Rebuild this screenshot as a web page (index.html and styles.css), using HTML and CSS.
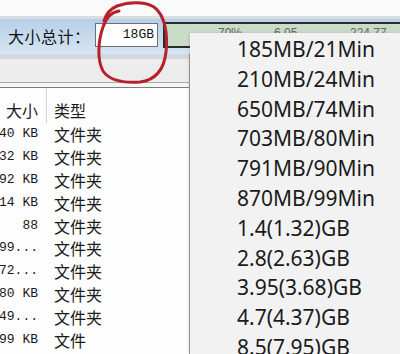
FILE: index.html
```html
<!DOCTYPE html>
<html lang="zh-CN">

<head>
    <meta charset="UTF-8">
    <meta name="viewport" content="width=device-width, initial-scale=1.0">
    <title>大小总计</title>
    <link rel="stylesheet" href="styles.css">
</head>

<body>
    <div class="window">
        <div class="top-band"></div>

        <div class="toolbar">
            <div class="total-label">大小总计：</div>
            <div class="total-input">18GB</div>
            <div class="progress">
                <span class="p-pct">70%</span>
                <span class="p-used">6.05 GB</span>
                <span class="p-free">224.77 MB</span>
            </div>
        </div>

        <div class="pane">
            <div class="sub-bar"></div>
            <div class="sub-gap"></div>
            <div class="list">
                <div class="list-head">
                    <div class="col-size">大小</div>
                    <div class="col-type">类型</div>
                </div>
                <div class="row"><div class="col-size">1,440 KB</div><div class="col-type">文件夹</div></div>
                <div class="row"><div class="col-size">832 KB</div><div class="col-type">文件夹</div></div>
                <div class="row"><div class="col-size">192 KB</div><div class="col-type">文件夹</div></div>
                <div class="row"><div class="col-size">314 KB</div><div class="col-type">文件夹</div></div>
                <div class="row"><div class="col-size">88</div><div class="col-type">文件夹</div></div>
                <div class="row"><div class="col-size">1,799...</div><div class="col-type">文件夹</div></div>
                <div class="row"><div class="col-size">572...</div><div class="col-type">文件夹</div></div>
                <div class="row"><div class="col-size">380 KB</div><div class="col-type">文件夹</div></div>
                <div class="row"><div class="col-size">349...</div><div class="col-type">文件夹</div></div>
                <div class="row"><div class="col-size">599 KB</div><div class="col-type">文件</div></div>
            </div>
        </div>

        <!-- disc sizes dropdown -->
        <ul class="size-menu">
            <li>185MB/21Min</li>
            <li>210MB/24Min</li>
            <li>650MB/74Min</li>
            <li>703MB/80Min</li>
            <li>791MB/90Min</li>
            <li>870MB/99Min</li>
            <li>1.4(1.32)GB</li>
            <li>2.8(2.63)GB</li>
            <li>3.95(3.68)GB</li>
            <li>4.7(4.37)GB</li>
            <li>8.5(7.95)GB</li>
        </ul>

        <!-- hand drawn red circle -->
        <svg class="mark" viewBox="0 0 400 354" width="400" height="354">
            <path d="M119,11 C112,12 106,18 103,27 C98,41 97,60 103,71 C109,80 124,83 140,82 C156,80 164,70 166,52 C168,34 165,15 154,7 C144,1 128,2 117,6 C110,9 106,14 104,21"
                fill="none" stroke="#b5222b" stroke-width="3" stroke-linecap="round" />
        </svg>
    </div>
</body>

</html>
```

FILE: styles.css
```css
body {
    margin: 0;
    background: #fff;
    font-family: "Noto Sans CJK SC", sans-serif;
}

.window {
    position: relative;
    width: 400px;
    height: 354px;
    overflow: hidden;
    background: #fdfdfd;
}

.top-band {
    height: 16px;
    background: #fafafa;
    border-bottom: 3px solid #d9dde1;
}

.toolbar {
    display: flex;
    height: 35px;
    padding-left: 8px;
    background: linear-gradient(#b7cfe8, #d6e5f3);
}

.total-label {
    width: 87px;
    margin-top: 7px;
    font-size: 16px;
    line-height: 20px;
    letter-spacing: 0.5px;
    color: #111;
}

.total-input {
    width: 63px;
    height: 24px;
    margin-top: 4px;
    box-sizing: border-box;
    padding-right: 3px;
    border: 1px solid #6f6f6f;
    background: #fff;
    font-family: "Liberation Mono", monospace;
    font-size: 13px;
    line-height: 22px;
    text-align: right;
    color: #111;
}

.progress {
    flex: 1;
    display: flex;
    height: 26px;
    margin-top: 3px;
    margin-left: 5px;
    box-sizing: border-box;
    padding: 2px 0 0 53px;
    border: 2px solid #2b2b2b;
    border-right: none;
    background: #c9dcc7;
    font-family: "Liberation Sans", sans-serif;
    font-size: 12px;
    line-height: 14px;
    color: #666;
}

.p-used {
    margin-left: 32px;
}

.p-free {
    margin-left: 38px;
}

.pane {
    width: 189px;
    height: 300px;
    border-right: 1px solid #9c9c9c;
}

.sub-bar {
    height: 23px;
    background: #ececec;
    border-top: 5px solid #d2d8de;
    border-bottom: 1px solid #a9a9a9;
}

.sub-gap {
    height: 4px;
    background: #f5f5f5;
    border-bottom: 1px solid #7d7d7d;
}

.list {
    background: #fdfdfd;
    color: #1a1a1a;
}

.list-head {
    display: flex;
    height: 35px;
    box-sizing: border-box;
    padding-top: 11px;
    line-height: 22px;
}

.list-head .col-size {
    font-family: "Noto Sans CJK SC", sans-serif;
    font-size: 16px;
    height: 24px;
    margin-top: -11px;
    padding-top: 11px;
}

.list-head .col-type {
    margin-top: -11px;
    padding-top: 11px;
    height: 24px;
    border-left: 1px solid #d4d4d4;
    padding-left: 7px;
}

.row {
    display: flex;
    height: 22.9px;
    line-height: 22.9px;
}

.col-size {
    display: flex;
    justify-content: flex-end;
    flex: none;
    width: 46px;
    box-sizing: border-box;
    padding-right: 8px;
    white-space: nowrap;
    font-family: "Liberation Mono", monospace;
    font-size: 13px;
}

.col-type {
    padding-left: 8px;
    font-size: 16px;
    white-space: nowrap;
}

.size-menu {
    position: absolute;
    left: 190px;
    top: 33px;
    right: 0;
    bottom: 0;
    margin: 0;
    padding: 2px 0 0 47px;
    list-style: none;
    background: #f2f2f2;
    box-shadow: -1px 0 3px rgba(0, 0, 0, 0.12);
    font-family: "Noto Sans", sans-serif;
    font-size: 21px;
    line-height: 29.8px;
    color: #1b1b1b;
}

.mark {
    position: absolute;
    left: 0;
    top: 0;
    pointer-events: none;
}
```
